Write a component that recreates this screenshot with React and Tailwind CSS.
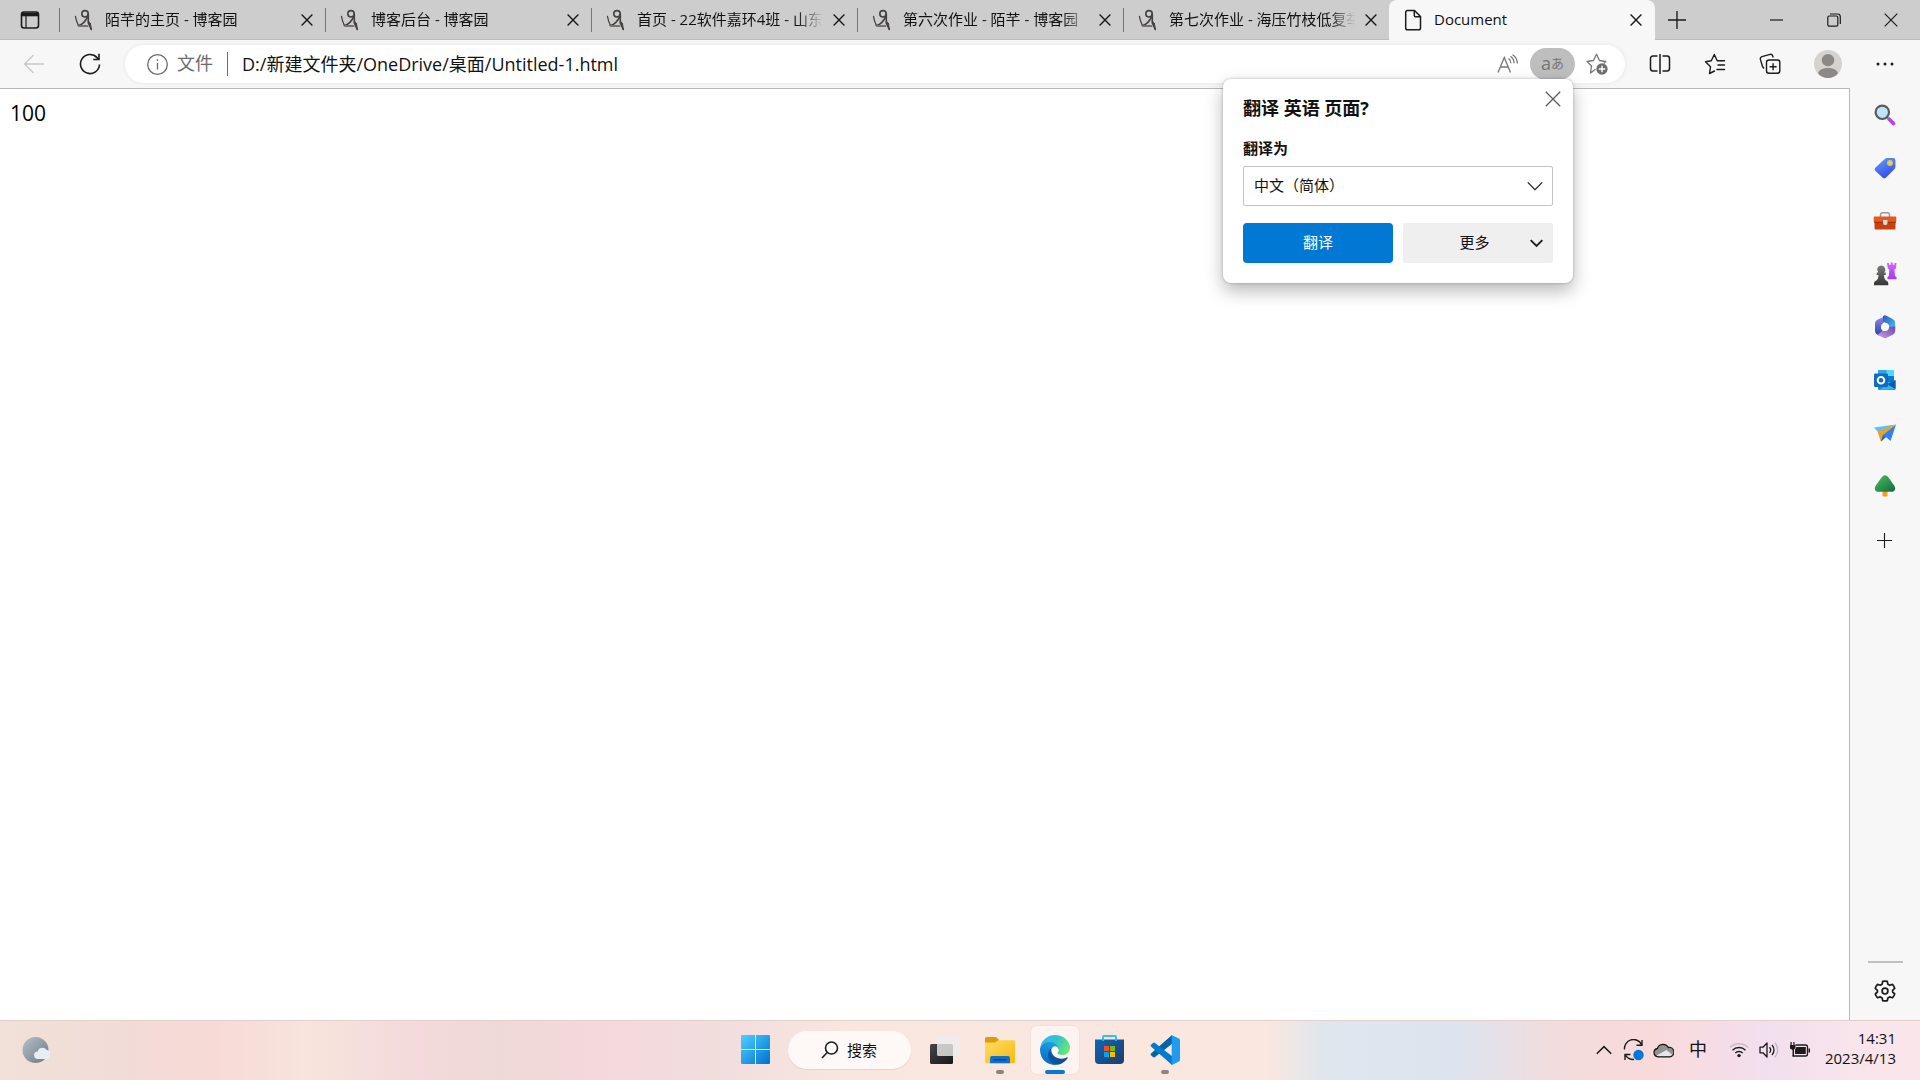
import React from 'react';

// Blog favicon used by the background tabs
const BlogIcon = () => (
  <svg width="19" height="22" viewBox="0 0 19 22" fill="none" stroke="#454040" strokeLinecap="round" strokeLinejoin="round">
    <circle cx="11" cy="4.800" r="3.200" strokeWidth="1.600" />
    <path d="M1.500 7.500c.6 3.500 1.600 6.500 2.900 9" strokeWidth="1.300" />
    <path d="M4.500 16.500c3.300-.6 7-4 9.700-9.600" strokeWidth="1.700" />
    <path d="M14.300 5v9l3 6.500" strokeWidth="1.600" />
    <path d="M14.300 12.500l3 8-.8-6z" fill="#454040" strokeWidth="1" />
    <path d="M5 17h8.500" strokeWidth="1.800" stroke="#777272" />
  </svg>
);

const PageIcon = () => (
  <svg width="18" height="22" viewBox="0 0 18 22" fill="none" stroke="#1b1b1b" strokeWidth="1.5" strokeLinejoin="round">
    <path d="M3.500 1.500h7l6 6v11.500a1.800 1.800 0 0 1-1.800 1.800H3.500A1.800 1.800 0 0 1 1.700 19V3.300a1.800 1.800 0 0 1 1.800-1.800z" />
    <path d="M10.300 1.500v5a1.300 1.300 0 0 0 1.300 1.300h4.900" />
  </svg>
);

const Cross = ({ size = 12, color = '#1b1b1b', width = 1.4 }) => (
  <svg width={size} height={size} viewBox="0 0 12 12" stroke={color} strokeWidth={(width * 12) / size}>
    <path d="M.6.6l10.800 10.800M11.400.6L.6 11.400" />
  </svg>
);

const Plus = ({ size }) => (
  <svg width={size} height={size} viewBox="0 0 16 16" stroke="#1b1b1b" strokeWidth="1.200">
    <path d="M8 0v16M0 8h16" />
  </svg>
);

const Chevron = ({ size = 16, width = 1.200, up = false }) => (
  <svg width={size} height="10" viewBox="0 0 16 10" fill="none" stroke="#1b1b1b" strokeWidth={width}>
    <path d={up ? 'M.8 8.800L8 1.600l7.200 7.200' : 'M.8 1.400L8 8.600l7.200-7.200'} />
  </svg>
);

const tabs = [
  { title: '陌芊的主页 - 博客园' },
  { title: '博客后台 - 博客园' },
  { title: '首页 - 22软件嘉环4班 - 山东' },
  { title: '第六次作业 - 陌芊 - 博客园' },
  { title: '第七次作业 - 海压竹枝低复举' },
];

const TabBar = () => (
  <header className="flex h-10 bg-[#cdcdcd] shadow-[inset_0_-1px_0_#bcbcbc]">
    <button aria-label="标签操作菜单" className="flex w-[59px] items-center justify-center">
      <svg width="20" height="20" viewBox="0 0 20 20" fill="none" stroke="#1b1b1b" strokeWidth="1.600">
        <rect x="1.500" y="2" width="17" height="16" rx="2.500" />
        <path d="M2 4.500h16" strokeWidth="3.600" />
        <path d="M6 6v12" strokeWidth="1.200" />
      </svg>
    </button>
    <nav className="flex">
      {tabs.map((tab) => (
        <div key={tab.title} className="flex w-[266px] items-center">
          <span className="h-6 w-px bg-[#767676]" />
          <a href="#" className="flex items-center pl-3.5">
            <BlogIcon />
            <span className="ml-3 w-[186px] overflow-hidden pb-0.5 text-[15px] leading-5 whitespace-nowrap [mask-image:linear-gradient(to_right,#000_86%,transparent)]">
              {tab.title}
            </span>
          </a>
          <button aria-label="关闭标签页" className="ml-1.5 p-1"><Cross /></button>
        </div>
      ))}
      <div className="flex w-[266px] items-center rounded-t-lg bg-[#f7f7f7]">
        <a href="#" className="flex items-center pl-[15px]">
          <PageIcon />
          <span className="ml-3 w-[192px] pb-0.5 text-[15px] leading-5">Document</span>
        </a>
        <button aria-label="关闭标签页" className="p-1"><Cross /></button>
      </div>
    </nav>
    <button aria-label="新建标签页" className="flex w-11 items-center justify-center"><Plus size={18} /></button>
    <div className="ml-auto flex pr-px">
      <button aria-label="最小化" className="flex w-[57px] items-center justify-center">
        <svg width="13" height="2" viewBox="0 0 13 2"><path d="M0 1h13" stroke="#1b1b1b" strokeWidth="1.200" /></svg>
      </button>
      <button aria-label="还原" className="flex w-[57px] items-center justify-center">
        <svg width="14" height="14" viewBox="0 0 14 14" fill="none" stroke="#1b1b1b" strokeWidth="1.200">
          <rect x=".8" y="3" width="10" height="10.200" rx="1.500" />
          <path d="M3 1h7.500A2.800 2.800 0 0 1 13.300 3.800V11" />
        </svg>
      </button>
      <button aria-label="关闭" className="flex w-[57px] items-center justify-center"><Cross size={14} width={1.200} /></button>
    </div>
  </header>
);

const Toolbar = () => (
  <div className="flex h-12 items-center bg-[#f7f7f7]">
    <button aria-label="后退" className="ml-3 flex w-11 justify-center">
      <svg width="22" height="20" viewBox="0 0 22 20" fill="none" stroke="#c8c8c8" strokeWidth="1.300">
        <path d="M21 10H2M10.500 1L1.500 10l9 9" />
      </svg>
    </button>
    <button aria-label="刷新" className="ml-3 flex w-11 justify-center">
      <svg width="22" height="22" viewBox="0 0 22 22" fill="none" stroke="#1b1b1b" strokeWidth="1.600">
        <path d="M20.500 11.500A9.500 9.500 0 1 1 18 4.600l1.500 1.600" />
        <path d="M20 .8v5.700h-5.700" />
      </svg>
    </button>
    <div className="ml-[13px] flex h-[38px] flex-1 items-center rounded-full bg-white pr-2.5 pl-[21px] shadow-[0_0_4px_#e6e6e6]">
      <button className="flex items-center text-[18px] leading-6 text-[#6b6b6b]">
        <svg width="23" height="23" viewBox="0 0 23 23" fill="none" stroke="#6b6b6b" strokeWidth="1.300">
          <circle cx="11.500" cy="11.500" r="9.800" />
          <path d="M11.500 10v6.500M11.500 6.300v1.600" />
        </svg>
        <span className="ml-2 pb-0.5">文件</span>
      </button>
      <span className="mx-3.5 h-6 w-px bg-[#6b6b6b]" />
      <input
        aria-label="地址栏"
        defaultValue="D:/新建文件夹/OneDrive/桌面/Untitled-1.html"
        className="h-7 flex-1 bg-transparent pb-0.5 text-[18px] leading-6 outline-none"
      />
      <button aria-label="大声朗读" className="flex w-9 justify-center">
        <svg width="22" height="20" viewBox="0 0 22 20" fill="none" stroke="#767676" strokeWidth="1.300">
          <path d="M1 18.500L7.300 3.500l6.200 15M3.300 13h8" />
          <path d="M11.500 4.500c1.600 1.200 2.400 2.800 2.400 4.800M13.500 2.200c2.300 1.500 3.500 4 3.500 7.100M15.500.7c3 1.800 4.800 4.800 4.800 8.800" />
        </svg>
      </button>
      <button aria-label="翻译此页" className="ml-1 flex h-8 w-[45px] items-center justify-center rounded-full bg-[#bebebe] pb-0.5 text-[#767676]">
        <span className="text-[18px] leading-6">a</span>
        <span className="text-[13px] leading-6">あ</span>
      </button>
      <button aria-label="添加到收藏夹" className="ml-1 flex w-9 justify-center">
        <svg width="22" height="22" viewBox="0 0 22 22" fill="none" stroke="#767676" strokeWidth="1.300" strokeLinejoin="round">
          <path d="M9.500 16.300L4.500 20l1-7L1 8.500l6.400-1L10.500 1.200l3 6.300 6.300 1-2 2" />
          <circle cx="16" cy="16" r="5.700" fill="#6e6e6e" stroke="none" />
          <path d="M16 12.800v6.400M12.800 16h6.400" stroke="#fff" strokeWidth="1.400" />
        </svg>
      </button>
    </div>
    <div className="flex items-center pl-[7px]">
      <button aria-label="分屏" className="flex w-[55px] justify-center">
        <svg width="22" height="22" viewBox="0 0 22 22" fill="none" stroke="#1b1b1b" strokeWidth="1.500">
          <path d="M8.500 3H4a2.500 2.500 0 0 0-2.500 2.500v10A2.500 2.500 0 0 0 4 18h4.500M13.500 3H18a2.500 2.500 0 0 1 2.500 2.500v10A2.500 2.500 0 0 1 18 18h-4.500M11 1v20" />
        </svg>
      </button>
      <button aria-label="收藏夹" className="flex w-[55px] justify-center">
        <svg width="22" height="22" viewBox="0 0 22 22" fill="none" stroke="#1b1b1b" strokeWidth="1.400" strokeLinejoin="round" strokeLinecap="round">
          <path d="M10.500 18l-5 2.500 1-6.700L1.500 8.800l5.800-1L10.300 1.500l2.900 6.300h7.300M14 12h6.500M13 16.500h7.500" />
        </svg>
      </button>
      <button aria-label="集锦" className="flex w-[55px] justify-center">
        <svg width="22" height="22" viewBox="0 0 22 22" fill="none" stroke="#1b1b1b" strokeWidth="1.400" strokeLinejoin="round">
          <path d="M5 15.500l-1.500-2L1.400 6.400a2.300 2.300 0 0 1 1.600-2.800l8-2.200a2.300 2.300 0 0 1 2.700 1.500l.5 1.600" />
          <rect x="7.500" y="7" width="13.300" height="13.300" rx="2.500" />
          <path d="M14.100 10.200v7M10.600 13.700h7" />
        </svg>
      </button>
      <button aria-label="个人资料" className="flex w-[61px] justify-center">
        <svg width="28" height="28" viewBox="0 0 28 28">
          <circle cx="14" cy="14" r="14" fill="#d5d3d0" />
          <circle cx="14" cy="10.200" r="6.200" fill="#8c8886" />
          <path d="M4 23.500c1-4 5-5.500 10-5.500s9 1.500 10 5.500A14 14 0 0 1 14 28 14 14 0 0 1 4 23.500z" fill="#8c8886" />
        </svg>
      </button>
      <button aria-label="设置及其他" className="flex w-[54px] justify-center">
        <svg width="18" height="4" viewBox="0 0 18 4" fill="#1b1b1b">
          <circle cx="2" cy="2" r="1.500" /><circle cx="9" cy="2" r="1.500" /><circle cx="16" cy="2" r="1.500" />
        </svg>
      </button>
      <span className="w-2" />
    </div>
  </div>
);

const SearchIcon = () => (
  <svg width="22" height="22" viewBox="0 0 22 22">
    <path d="M15 15l4.500 4.500" stroke="#b93cf8" strokeWidth="3.600" strokeLinecap="round" />
    <path d="M12.500 12.500l2.500 2.500" stroke="#8a8a8a" strokeWidth="2" />
    <circle cx="8.300" cy="8.300" r="6.700" fill="#bfe4fa" stroke="#5a5a5a" strokeWidth="2.200" />
  </svg>
);

const TagIcon = () => (
  <svg width="22" height="22" viewBox="0 0 22 22">
    <defs>
      <linearGradient id="tag" x1="0" y1="0" x2=".5" y2="1"><stop stopColor="#5aa7fb" /><stop offset="1" stopColor="#3a4bea" /></linearGradient>
    </defs>
    <path d="M13 1h6.200a2.200 2.200 0 0 1 2.200 2.200V10a3 3 0 0 1-.9 2L12 20.500a2.500 2.500 0 0 1-3.500 0L1.500 14.100a2.500 2.500 0 0 1 0-3.500L11 1.800A3.500 3.500 0 0 1 13 1z" fill="url(#tag)" />
    <circle cx="16" cy="6" r="2.200" fill="#b9d0ee" stroke="#f7c52c" strokeWidth="1.500" />
  </svg>
);

const ToolboxIcon = () => (
  <svg width="24" height="22" viewBox="0 0 24 22">
    <path d="M7.500 7V4.500A2 2 0 0 1 9.500 2.700h5a2 2 0 0 1 2 1.800V7" fill="none" stroke="#999" strokeWidth="1.500" />
    <rect x="1.500" y="8" width="21" height="11.500" rx="1.500" fill="#c9420d" />
    <path d="M1.500 6.500h21a.8.800 0 0 1 .8.800V11a1 1 0 0 1-1 1H1.700a1 1 0 0 1-1-1V7.300a.8.800 0 0 1 .8-.8z" fill="#e35a1c" />
    <path d="M1 12.300h22" stroke="#95300a" />
    <path d="M10 10h4.500v3a2 2 0 0 1-2.200 2A2 2 0 0 1 10 13z" fill="#d8d8d8" />
  </svg>
);

const GamesIcon = () => (
  <svg width="24" height="24" viewBox="0 0 24 24">
    <defs>
      <linearGradient id="rook" x1="0" y1="0" x2="0" y2="1"><stop stopColor="#d666fb" /><stop offset="1" stopColor="#a13cf0" /></linearGradient>
      <linearGradient id="pawn" x1="0" y1="0" x2="0" y2="1"><stop stopColor="#7c7c7c" /><stop offset="1" stopColor="#353535" /></linearGradient>
    </defs>
    <path d="M14 1h2v1.800h1.800V.6h2v2.200h1.700V1h2l-.6 5.500-1.400 1 .5 6.500 1.500 1v2.300h-9V15l1.300-1 .5-6.500-1.500-1z" fill="url(#rook)" />
    <path d="M8.300 3.600a4 4 0 0 1 2.700 7h1.800v2.300H11c0 3 .8 5 3 6.200.9.500 1.300 1.500 1.300 2.400v1.800H1v-1.800c0-1 .5-1.900 1.300-2.400 2.300-1.200 3.200-3.200 3.200-6.200H3.700v-2.300h1.800a4 4 0 0 1 2.800-7z" fill="url(#pawn)" />
  </svg>
);

const OfficeIcon = () => (
  <svg width="22" height="24" viewBox="0 0 22 24">
    <defs>
      <linearGradient id="off1" x1="0" y1="0" x2="1" y2="1"><stop stopColor="#2f55c4" /><stop offset="1" stopColor="#45c5ef" /></linearGradient>
      <linearGradient id="off2" x1="0" y1="0" x2="0" y2="1"><stop stopColor="#9a86ea" /><stop offset="1" stopColor="#2b45a5" /></linearGradient>
      <linearGradient id="off3" x1="0" y1="1" x2="1" y2="0"><stop stopColor="#cf9ded" /><stop offset="1" stopColor="#6c45a8" /></linearGradient>
    </defs>
    <path d="M11 1L3 4.900a4 4 0 0 0-2 3.500V16a4 4 0 0 0 2 3.500l2 1 4-4-2-4L10 7l3-1z" fill="url(#off2)" />
    <path d="M9 1.200A3 3 0 0 1 12.500.8L19 4.300a4 4 0 0 1 2.200 3.500V14L15 11.500 14 9 9 6.500z" fill="url(#off1)" />
    <path d="M21.200 11.500V16a4 4 0 0 1-2 3.500l-6.500 3.300a3.500 3.500 0 0 1-3.300 0L3.500 19.700 9 15.500l2.500.5 3.500-4z" fill="url(#off3)" />
    <circle cx="11" cy="12" r="4" fill="#f7f7f7" />
  </svg>
);

const OutlookIcon = () => (
  <svg width="22" height="22" viewBox="0 0 22 22">
    <path d="M4 1h16v14H4z" fill="#28a8ea" />
    <path d="M12.500 1H20v6h-7.500z" fill="#50d9ff" />
    <path d="M12.500 7H20v6h-7.500z" fill="#0a78d3" />
    <path d="M4 12l9 4 8.500-5v9a1 1 0 0 1-1 1H5a1 1 0 0 1-1-1z" fill="#1490df" />
    <path d="M21.500 11v9l-8-5z" fill="#0f5aa6" />
    <path d="M5 21l16.500-.8L13.500 16z" fill="#31b6f1" />
    <rect x="0" y="4.500" width="14" height="13.500" rx="1.300" fill="#0f6cc2" />
    <circle cx="7" cy="11.200" r="3.300" fill="none" stroke="#fff" strokeWidth="2" />
  </svg>
);

const DropIcon = () => (
  <svg width="24" height="20" viewBox="0 0 24 20">
    <path d="M1 4.500L23 1.500 5 9z" fill="#52c3fb" />
    <path d="M23 1.500L17.500 18 13 14l-5 4.500 1.500-7z" fill="#2f80f4" />
    <path d="M23 1.500L4.500 8.500l3.300 10L10 12z" fill="#f2a116" />
    <path d="M8 18.500l1.800-6L13 14z" fill="#2566d4" />
  </svg>
);

const TreeIcon = () => (
  <svg width="22" height="24" viewBox="0 0 22 24">
    <defs>
      <linearGradient id="tree" x1="0" y1="0" x2="1" y2="1"><stop stopColor="#4dc05d" /><stop offset="1" stopColor="#0f6b41" /></linearGradient>
    </defs>
    <rect x="8.500" y="16" width="5" height="6.500" rx=".8" fill="#f0a01c" />
    <path d="M11 1.200c1.700 0 2.600 1.300 3.800 2.800l5.400 7.500c1.800 3 1.300 6.300-3 6.300H4.800c-4.300 0-4.800-3.300-3-6.300L7.200 4C8.400 2.500 9.300 1.200 11 1.200z" fill="url(#tree)" />
  </svg>
);

const sidebarApps = [
  { name: '搜索', Icon: SearchIcon },
  { name: '购物', Icon: TagIcon },
  { name: '工具', Icon: ToolboxIcon },
  { name: '游戏', Icon: GamesIcon },
  { name: 'Microsoft 365', Icon: OfficeIcon },
  { name: 'Outlook', Icon: OutlookIcon },
  { name: 'Drop', Icon: DropIcon },
  { name: '电子树', Icon: TreeIcon },
];

const Sidebar = () => (
  <aside className="flex w-[70px] flex-col items-center pb-[15px]">
    {sidebarApps.map(({ name, Icon }) => (
      <button key={name} aria-label={name} className="flex h-[53px] w-full items-center justify-center pr-px">
        <Icon />
      </button>
    ))}
    <button aria-label="自定义边栏" className="flex h-14 w-full items-center justify-center pr-px"><Plus size={15} /></button>
    <span className="mt-auto h-0.5 w-[35px] bg-[#c0c0c0]" />
    <button aria-label="设置" className="mt-3.5 flex h-7 items-center justify-center">
      <svg width="22" height="22" viewBox="0 0 22 22" fill="none" stroke="#1b1b1b" strokeWidth="1.700" strokeLinejoin="round">
        <path d="M8.700 1.400Q11 .8 13.300 1.400L13.900 4.300 15.700 5.300 18.500 4.400Q20 6 20.700 8.300L18.600 10.300V12L20.700 13.900Q20 16.100 18.500 17.800L15.700 16.900 13.900 17.900 13.300 20.700Q11 21.200 8.700 20.700L8.100 17.900 6.300 16.900 3.500 17.800Q2 16.100 1.300 13.900L3.400 12V10.300L1.300 8.300Q2 6 3.500 4.400L6.300 5.300 8.100 4.300z" />
        <circle cx="11" cy="11.100" r="2.900" />
      </svg>
    </button>
  </aside>
);

const TranslatePopup = () => (
  <section
    role="dialog"
    aria-label="翻译"
    className="absolute top-[79px] right-[347px] z-10 w-[350px] rounded-lg bg-white p-5 pt-[15px] shadow-[0_8px_18px_rgba(0,0,0,0.28),0_0_3px_rgba(0,0,0,0.25)]"
  >
    <button aria-label="关闭" className="absolute top-[11px] right-[11px] p-px"><Cross size={16} color="#5c5c5c" width={1.300} /></button>
    <h2 className="text-[18px] leading-7 font-bold">翻译 英语 页面?</h2>
    <label htmlFor="lang" className="mt-3.5 block text-[15px] leading-6 font-bold">翻译为</label>
    <div className="relative mt-1.5">
      <select id="lang" className="h-10 w-full appearance-none rounded-[2px] border border-[#c4c4c4] bg-white px-2.5 pb-0.5 text-[15px]">
        <option>中文（简体）</option>
      </select>
      <span className="pointer-events-none absolute inset-y-0 right-2.5 flex items-center"><Chevron /></span>
    </div>
    <div className="mt-[17px] grid grid-cols-2 gap-2.5">
      <button className="h-10 rounded-[4px] bg-[#0078d4] pb-0.5 text-[15px] text-white">翻译</button>
      <button className="flex h-10 items-center rounded-[2px] bg-[#efefef] pr-2.5 text-[15px]">
        <span className="flex-1 pb-0.5 pl-4">更多</span>
        <Chevron size={13} width={2.200} />
      </button>
    </div>
  </section>
);

const WindowsLogo = () => (
  <svg width="29" height="29" viewBox="0 0 29 29">
    <defs>
      <linearGradient id="win" gradientUnits="userSpaceOnUse" x1="0" y1="0" x2="29" y2="29"><stop stopColor="#4fd0fd" /><stop offset="1" stopColor="#0070d2" /></linearGradient>
    </defs>
    <path d="M1 0h13v14H0V1a1 1 0 0 1 1-1zM15 0h13a1 1 0 0 1 1 1v13H15zM0 15h14v14H1a1 1 0 0 1-1-1zM15 15h14v13a1 1 0 0 1-1 1H15z" fill="url(#win)" />
  </svg>
);

const TaskView = () => (
  <svg width="30" height="28" viewBox="0 0 30 28">
    <defs>
      <linearGradient id="tv" x1="0" y1="0" x2="1" y2="1"><stop stopColor="#454545" /><stop offset="1" stopColor="#181818" /></linearGradient>
    </defs>
    <rect y="8" width="23" height="20" rx="1.500" fill="url(#tv)" />
    <rect x="7" y="0" width="23" height="20" rx="1.500" fill="#eee" fillOpacity=".8" />
  </svg>
);

const FolderIcon = () => (
  <svg width="30" height="28" viewBox="0 0 30 28">
    <defs>
      <linearGradient id="fold" x1="0" y1="0" x2="1" y2="1"><stop stopColor="#ffdc66" /><stop offset="1" stopColor="#f7b90f" /></linearGradient>
    </defs>
    <path d="M0 2.500A1.500 1.500 0 0 1 1.500 1H10a3 3 0 0 1 2 .8L14 4v5H0z" fill="#dc9b08" />
    <path d="M0 6.500h9.500c1 0 1.600-.5 2.300-1.200.6-.7 1.200-1.100 2.200-1.100h14.500A1.500 1.500 0 0 1 30 5.700v20a1.500 1.500 0 0 1-1.500 1.500h-27A1.500 1.500 0 0 1 0 25.700z" fill="url(#fold)" />
    <path d="M5 27.200V22a2 2 0 0 1 2-2h16a2 2 0 0 1 2 2v5.200z" fill="#1170c8" />
    <path d="M8.500 23.800h13" stroke="#0a4484" strokeWidth="1.300" />
  </svg>
);

const EdgeIcon = () => (
  <svg width="30" height="30" viewBox="0 0 256 256">
    <defs>
      <linearGradient id="ed1" x1=".1" y1=".5" x2=".95" y2=".5"><stop stopColor="#0c59a4" /><stop offset="1" stopColor="#114a8b" /></linearGradient>
      <linearGradient id="ed2" x1=".6" y1=".1" x2=".3" y2="1"><stop stopColor="#1b9de2" /><stop offset="1" stopColor="#0669c4" /></linearGradient>
      <linearGradient id="ed3" x1="0" y1=".2" x2="1" y2=".6"><stop stopColor="#35b8f1" /><stop offset=".5" stopColor="#35c1cf" /><stop offset="1" stopColor="#66eb6e" /></linearGradient>
    </defs>
    <path d="M231 190.500a93.700 93.700 0 0 1-10.500 4.700 102 102 0 0 1-36 6.500c-47.400 0-88.700-32.600-88.700-74.500a31.500 31.500 0 0 1 16.400-27.300c-42.900 1.800-54 46.500-54 72.700 0 74 68.200 81.600 83 81.600 7.900 0 19.800-2.300 27-4.600l1.300-.4a128.300 128.300 0 0 0 66.600-52.800 4 4 0 0 0-5.100-5.900z" fill="url(#ed1)" />
    <path d="M105.700 241.400a79.200 79.200 0 0 1-22.700-21.300 80.700 80.700 0 0 1 29.500-120c3.200-1.500 8.500-4.100 15.600-4a32.400 32.400 0 0 1 25.700 13 31.900 31.900 0 0 1 6.300 18.700c0-.2 24.500-79.600-80-79.600-43.900 0-80 41.700-80 78.200a130 130 0 0 0 12.100 56 128 128 0 0 0 156.400 67 75.500 75.500 0 0 1-62.800-8z" fill="url(#ed2)" />
    <path d="M152.300 148.900c-.9 1-3.400 2.500-3.400 5.600 0 2.600 1.700 5.200 4.800 7.300 14.300 10 41.400 8.600 41.500 8.600a59.600 59.600 0 0 0 30.300-8.300 61.400 61.400 0 0 0 30.400-52.900c.3-22.400-8-37.300-11.300-43.900C223.500 23.900 177.700 0 128 0A128 128 0 0 0 0 126.200c.5-36.500 36.800-66 80-66 3.500 0 23.500.3 42 10 16.300 8.600 24.900 18.900 30.800 29.200 6.200 10.700 7.300 24.100 7.300 29.500s-2.700 13.300-7.800 20z" fill="url(#ed3)" />
  </svg>
);

const StoreIcon = () => (
  <svg width="29" height="29" viewBox="0 0 29 29">
    <defs>
      <linearGradient id="store" x1="0" y1="0" x2="1" y2="1"><stop stopColor="#0b67ba" /><stop offset="1" stopColor="#233a67" /></linearGradient>
    </defs>
    <path d="M8 5.500V2a1 1 0 0 1 1-1h11a1 1 0 0 1 1 1v3.500" fill="none" stroke="#38bdf3" strokeWidth="2" />
    <path d="M0 4.500h29V25a4 4 0 0 1-4 4H4a4 4 0 0 1-4-4z" fill="url(#store)" />
    <path d="M8 3.500v2.500M21 3.500v2.500" stroke="#38bdf3" strokeWidth="1.600" />
    <path d="M9 11h5v5H9z" fill="#f25022" /><path d="M15 11h5v5h-5z" fill="#7fba00" />
    <path d="M9 17h5v5H9z" fill="#00a4ef" /><path d="M15 17h5v5h-5z" fill="#ffb900" />
  </svg>
);

const CodeIcon = () => (
  <svg width="30" height="30" viewBox="0 0 30 30">
    <path d="M22 0L1 18.500a1.300 1.300 0 0 0 0 1.800l2 1.800a1.300 1.300 0 0 0 1.700.1L22.500 8.500z" fill="#0065a9" />
    <path d="M22 30L1 11.500a1.300 1.300 0 0 1 0-1.800l2-1.800a1.300 1.300 0 0 1 1.700-.1L22.500 21.500z" fill="#007acc" />
    <path d="M22 .2l7 3.200a1.800 1.800 0 0 1 1 1.600v20a1.800 1.800 0 0 1-1 1.600l-7 3.300a1.800 1.800 0 0 1-.3-1.200V1.300c0-.5 0-.9.3-1.100z" fill="#1f9cf0" />
  </svg>
);

const pinned = [
  { name: '任务视图', Icon: TaskView },
  { name: '文件资源管理器', Icon: FolderIcon, state: 'running' },
  { name: 'Microsoft Edge', Icon: EdgeIcon, state: 'active' },
  { name: 'Microsoft Store', Icon: StoreIcon },
  { name: 'Visual Studio Code', Icon: CodeIcon, state: 'running' },
];

const Taskbar = () => (
  <footer className="flex h-[60px] items-center border-t border-[#e6d0cc] bg-[linear-gradient(to_right,#f1e1d8_0%,#f2dbd7_7%,#f7dad6_11%,#f7e4dc_16%,#f3d9db_22%,#efd9d7_26%,#f4d8dc_31%,#f2dede_38%,#f9e6df_44%,#fae8df_60%,#fae7df_66%,#dfe6ee_69%,#dee4ef_76%,#f2dcdd_81%,#f9dadb_86%,#f2dfee_92%,#f9e5eb_97%,#fae5ea_100%)] pb-0.5">
    <div className="flex flex-1 pl-[22px]">
      <button aria-label="小组件">
        <svg width="28" height="28" viewBox="0 0 28 28">
          <defs>
            <linearGradient id="moon" x1="0" y1="0" x2="1" y2="1"><stop stopColor="#b5c2ce" /><stop offset="1" stopColor="#6d777f" /></linearGradient>
          </defs>
          <circle cx="13.500" cy="14" r="13" fill="url(#moon)" />
          <path d="M16 23a3.800 3.800 0 0 1-.3-7.600 5 5 0 0 1 9-1.300A4.500 4.500 0 0 1 25 23z" fill="#e6edf5" />
        </svg>
      </button>
    </div>
    <div className="flex items-center pl-0.5">
      <button aria-label="开始" className="flex w-12 justify-center"><WindowsLogo /></button>
      <button className="mr-2.5 ml-2 flex h-[38px] w-[123px] items-center justify-center gap-2 rounded-full bg-[#fef9f7] text-[15px] leading-5 shadow-[0_1px_1px_#e5d3ce]">
        <svg width="18" height="18" viewBox="0 0 18 18" fill="none" stroke="#1b1b1b" strokeWidth="1.600">
          <circle cx="10.500" cy="7" r="6" />
          <path d="M6.200 11.500L1 17" />
        </svg>
        搜索
      </button>
      <div className="flex gap-[7px]">
        {pinned.map(({ name, Icon, state }) => (
          <button
            key={name}
            aria-label={name}
            className={`relative flex h-12 w-12 items-center justify-center rounded-md ${state === 'active' ? 'bg-[#fdf4f1] shadow-[0_0_1px_1px_#f1e0da]' : ''}`}
          >
            <Icon />
            {state === 'active' && <span className="absolute bottom-0 h-1 w-5 rounded-full bg-[#0a76d6]" />}
            {state === 'running' && <span className="absolute bottom-0 h-1 w-2 rounded-full bg-[#8c827f]" />}
          </button>
        ))}
      </div>
    </div>
    <div className="flex flex-1 items-center justify-end pr-6">
      <button aria-label="显示隐藏的图标" className="flex w-[30px] justify-center"><Chevron up width={1.500} /></button>
      <button aria-label="Windows 更新" className="flex w-[30px] justify-center">
        <svg width="22" height="22" viewBox="0 0 22 22" fill="none" stroke="#1b1b1b" strokeWidth="1.400">
          <path d="M1.500 10.500A9 9 0 0 1 18.500 5.500M13.500 6.300h5.500V1M2 21v-5.500h5.500M2.300 15.800A9.500 9.500 0 0 0 11 20.500" />
          <circle cx="15.500" cy="16" r="5.200" fill="#0078d7" stroke="none" />
        </svg>
      </button>
      <button aria-label="OneDrive" className="flex w-[30px] justify-center">
        <svg width="21" height="16" viewBox="0 0 21 16">
          <path d="M5 14.800a4.200 4.200 0 0 1-.6-8.300 6 6 0 0 1 11-1 4.700 4.700 0 0 1 1.600 9.300z" fill="#929292" stroke="#1b1b1b" strokeWidth="1.300" />
          <path d="M3.500 13.500L13.500 8l5.500 4.500a3.500 3.500 0 0 1-2.200 1.500H5a4 4 0 0 1-1.500-.5z" fill="#e6e6e6" />
        </svg>
      </button>
      <button aria-label="输入法" className="w-[38px] pb-0.5 text-[18px] leading-6">中</button>
      <button className="ml-3 flex items-center gap-2.5" aria-label="网络、音量和电池">
        <svg width="20" height="16" viewBox="0 0 20 16" fill="none" stroke="#1b1b1b" strokeWidth="1.400">
          <path d="M.8 5.500a13 13 0 0 1 18.400 0" stroke="#c9bcc3" />
          <path d="M3.500 8.200a9.200 9.200 0 0 1 13 0M6.300 11a5.200 5.200 0 0 1 7.400 0" />
          <circle cx="10" cy="13.600" r="1.700" fill="#1b1b1b" stroke="none" />
        </svg>
        <svg width="20" height="18" viewBox="0 0 20 18" fill="none" stroke="#1b1b1b" strokeWidth="1.300" strokeLinejoin="round">
          <path d="M1 6.200h3L8 2v14l-4-4.200H1z" />
          <path d="M10.500 6.300a4 4 0 0 1 0 5.400M13 4a7.300 7.300 0 0 1 0 10" />
          <path d="M15.700 1.700a10.500 10.500 0 0 1 0 14.600" stroke="#c3b8c3" />
        </svg>
        <svg width="22" height="18" viewBox="0 0 22 18" fill="#1b1b1b">
          <path d="M1.500 1h1.200v3h1.600V1h1.200v3h1v3L5 8.500v6.800H3.500V9L1 7.500V4h.5z" />
          <path d="M6.500 4h10A2 2 0 0 1 18.500 6v7a2 2 0 0 1-2 2h-13" fill="none" stroke="#1b1b1b" strokeWidth="1.300" />
          <path d="M7.500 6h9.300v7H6V8.500zM19.500 7.500h1.500v4h-1.500z" />
        </svg>
      </button>
      <button className="ml-3.5 pb-[3px] text-right text-[15px] leading-5">
        <time className="block">14:31</time>
        <time className="block">2023/4/13</time>
      </button>
    </div>
  </footer>
);

const App = () => {
  return (
    <div className="relative flex min-h-screen flex-col bg-[#f7f7f7] font-['Open_Sans','Noto_Sans_CJK_SC',sans-serif] text-[#111]">
      <TabBar />
      <Toolbar />
      <TranslatePopup />
      <div className="flex flex-1">
        <main className="flex-1 border-t border-r border-[#b8b8b8] bg-white px-2.5 py-2.5">
          <p className="text-[21px] leading-7 text-black">100</p>
        </main>
        <Sidebar />
      </div>
      <Taskbar />
    </div>
  );
};

export default App;
